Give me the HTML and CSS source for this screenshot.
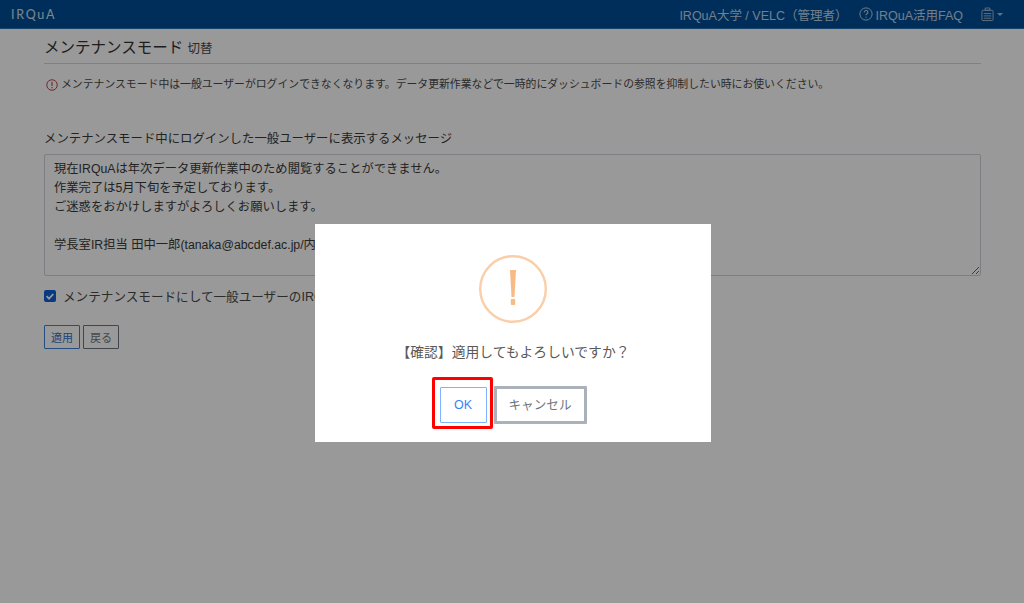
FILE: index.html
```html
<!DOCTYPE html>
<html lang="ja">
<head>
<meta charset="utf-8">
<title>メンテナンスモード切替</title>
<link rel="stylesheet" href="styles.css">
</head>
<body>
<nav class="navbar">
  <span class="brand">IRQuA</span>
  <div class="nav-right">
    <span class="nav-user">IRQuA大学 / VELC（管理者）</span>
    <span class="nav-faq">
      <svg class="faq-icon" viewBox="0 0 16 16" width="14" height="14" fill="none" stroke="currentColor"><circle cx="8" cy="8" r="7" stroke-width="1.1"/><path d="M5.9 6.2c0-1.3 1-2.1 2.2-2.1s2.1.8 2.1 1.9c0 1.7-2.2 1.7-2.2 3.3" stroke-width="1.2"/><path d="M8 11v1.4" stroke-width="1.3"/></svg>
      IRQuA活用FAQ
    </span>
    <span class="nav-menu">
      <svg viewBox="0 0 14 16" width="13" height="15" fill="none" stroke="currentColor" stroke-width="1"><rect x="1" y="3.5" width="12" height="11" rx="1"/><path d="M4.5 1h5v2.5h-5zM3 7h8M3 9.5h8M3 12h8"/></svg>
      <i class="caret"></i>
    </span>
  </div>
</nav>
<main class="content">
  <h1 class="title">メンテナンスモード <small>切替</small></h1>
  <p class="notice">
    <svg viewBox="0 0 16 16" width="12" height="12" fill="none" stroke="#b8404a"><circle cx="8" cy="8" r="7" stroke-width="1.3"/><path d="M8 3.8v5.4M8 10.8v1.5" stroke-width="1.5"/></svg>
    メンテナンスモード中は一般ユーザーがログインできなくなります。データ更新作業などで一時的にダッシュボードの参照を抑制したい時にお使いください。
  </p>
  <label class="msg-label" for="msg">メンテナンスモード中にログインした一般ユーザーに表示するメッセージ</label>
  <textarea id="msg" class="msg" rows="6">現在IRQuAは年次データ更新作業中のため閲覧することができません。
作業完了は5月下旬を予定しております。
ご迷惑をおかけしますがよろしくお願いします。

学長室IR担当 田中一郎(tanaka@abcdef.ac.jp/内線1234)</textarea>
  <div class="check-row">
    <span class="check"><svg viewBox="0 0 12 12" width="12" height="12" fill="none" stroke="#fff" stroke-width="1.8"><path d="M2.6 6.2l2.4 2.4 4.3-4.6"/></svg></span>
    <span>メンテナンスモードにして一般ユーザーのIRQuAへのログインを制限する</span>
  </div>
  <div class="actions">
    <button class="btn btn-primary">適用</button>
    <button class="btn btn-back">戻る</button>
  </div>
</main>
<div class="overlay"></div>
<div class="dialog">
  <svg class="warn" viewBox="0 0 68 68" width="68" height="68">
    <circle cx="34" cy="34" r="32.8" fill="none" stroke="#facea8" stroke-width="2.4"/>
    <path d="M31 15h6l-1.5 27h-3z" fill="#f8bb86"/>
    <rect x="31.8" y="44" width="4.4" height="6" rx=".8" fill="#f8bb86"/>
  </svg>
  <p class="question">【確認】適用してもよろしいですか？</p>
  <div class="dialog-actions">
    <button class="dbtn dbtn-ok">OK</button>
    <button class="dbtn dbtn-cancel">キャンセル</button>
    <span class="highlight"></span>
  </div>
</div>
</body>
</html>
```
FILE: styles.css
```css
* { box-sizing: border-box; }
html, body { height: 100%; }
body {
  margin: 0;
  background: #fff;
  color: #333;
  font-family: "Liberation Sans", "Noto Sans CJK JP", sans-serif;
  font-size: 13px;
  overflow: hidden;
}
.navbar {
  height: 29px;
  background: #004d96;
  display: flex;
  align-items: center;
  justify-content: space-between;
  padding: 0 21px 0 11px;
  border-bottom: 1px solid #2a6fb0;
}
.brand {
  font-size: 12.5px;
  letter-spacing: 1.7px;
  color: #d4e0ec;
  font-family: "Lato", sans-serif;
}
.nav-right { display: flex; align-items: center; font-size: 12.5px; color: #c0d4e8; }
.nav-user { margin-right: 12px; }
.nav-faq { display: flex; align-items: center; gap: 2px; margin-right: 18px; }
.nav-menu { display: flex; align-items: center; gap: 3px; color: #a8bfd6; }
.caret {
  width: 0; height: 0;
  border-left: 3px solid transparent;
  border-right: 3px solid transparent;
  border-top: 3px solid currentColor;
}
.content { padding: 5px 43px 0 44px; }
.title {
  margin: 0;
  padding: 0;
  font-size: 15.5px;
  font-weight: 400;
  line-height: 27px;
  border-bottom: 1px solid #d5d5d5;
  color: #333;
}
.title small { font-size: 12.5px; color: #4a4a4a; }
.notice {
  margin: 12px 0 0 2px;
  font-size: 10.85px;
  line-height: 17px;
  color: #4a4a4a;
  display: flex;
  align-items: center;
  gap: 3px;
}
.msg-label {
  display: block;
  margin-top: 37px;
  font-size: 12.4px;
  line-height: 19px;
  color: #3a3a3a;
}
.msg {
  display: block;
  width: 100%;
  height: 122px;
  margin-top: 5px;
  padding: 5px 9px;
  border: 1px solid #ced4da;
  border-radius: 2px;
  font: 12.3px/19px "Liberation Sans", "Noto Sans CJK JP", sans-serif;
  color: #3a3a3a;
  background: #fff;
  overflow: hidden;
}
.check-row {
  display: flex;
  align-items: center;
  gap: 7px;
  margin-top: 10px;
  height: 19px;
  font-size: 12.6px;
  color: #4a4a4a;
}
.check {
  width: 12px; height: 12px;
  background: #0f5fd6;
  border-radius: 2px;
  display: block;
  line-height: 0;
}
.actions { display: flex; gap: 3px; margin-top: 20px; }
.btn {
  width: 36px; height: 24px;
  padding: 0;
  background: #fff;
  font: 11px "Liberation Sans", "Noto Sans CJK JP", sans-serif;
  border-radius: 1px;
}
.btn-primary { border: 1px solid #3d82d8; color: #2e72c8; }
.btn-back { border: 1px solid #6c757d; color: #6c757d; }
.overlay {
  position: fixed;
  inset: 0;
  background: rgba(0, 0, 0, .4);
}
.dialog {
  position: fixed;
  left: 315px;
  top: 224px;
  width: 396px;
  height: 218px;
  background: #fff;
  display: flex;
  flex-direction: column;
  align-items: center;
  padding-top: 31px;
}
.warn { display: block; flex: none; }
.question {
  margin: 20px 0 0;
  font-size: 13.8px;
  line-height: 20px;
  color: #595959;
}
.dialog-actions {
  position: relative;
  display: flex;
  align-items: center;
  gap: 7px;
  margin-top: 23px;
}
.highlight {
  position: absolute;
  left: -8px;
  top: -9px;
  width: 61px;
  height: 52px;
  border: 3px solid #f00;
  border-radius: 2px;
}
.dbtn {
  height: 36px;
  padding: 0;
  background: #fff;
  font: 12.5px "Liberation Sans", "Noto Sans CJK JP", sans-serif;
  border-radius: 1px;
}
.dbtn-ok { width: 47px; border: 1px solid #7fb2ff; color: #3b82f6; }
.dbtn-cancel { width: 93px; height: 38px; padding-bottom: 3px; border: 3px solid #aab1b8; color: #6c757d; font-size: 12.6px; }
```
